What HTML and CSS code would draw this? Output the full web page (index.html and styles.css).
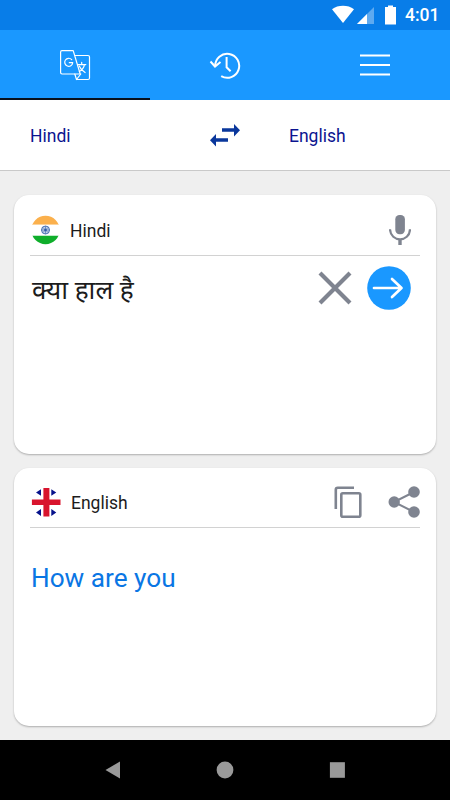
FILE: index.html
```html
<!DOCTYPE html>
<html lang="en">
<head>
    <meta charset="UTF-8">
    <meta name="viewport" content="width=device-width, initial-scale=1.0">
    <title>Hindi English Translator</title>
    <link rel="stylesheet" href="styles.css">
</head>
<body>
    <div class="status-bar">
        <svg class="signals" width="66" height="20" viewBox="0 0 66 20" fill="#fff">
            <path d="M0 4.2C6-.4 16-.4 22 4.2L11 18z"/>
            <path d="M42 2v17H25z" opacity=".35"/>
            <path d="M35 9v10H25z"/>
            <path d="M53 2h3V.5h5V2h3v17.5H53z"/>
        </svg>
        <span class="clock">4:01</span>
    </div>

    <div class="tabs">
        <div class="tab active">
            <svg width="32" height="32" viewBox="0 0 32 32" fill="none" stroke="#fff" stroke-width="1.2" stroke-linejoin="round" stroke-linecap="round">
                <path d="M3 1.6h11.2l7 23.4H3q-1.4 0-1.4-1.4V3Q1.6 1.6 3 1.6z"/>
                <path d="M15.8 6.5H29q1.5 0 1.5 1.5v21q0 1.5-1.5 1.5H17.5L15.8 25M17.5 30.5L21.8 25"/>
                <path d="M12.7 10.6A4 4 0 1 0 13.7 13.7H10.3"/>
                <path d="M18.6 15.6h8.2M22.7 13.4v2.2M25.4 15.6c-.4 3-2.6 5.5-5 7M20.4 17.2c1 2.7 3 4.7 5.7 6.3"/>
            </svg>
        </div>
        <div class="tab">
            <svg width="32" height="32" viewBox="0 0 32 32" fill="none" stroke="#fff" stroke-width="2">
                <path d="M6.2 17A12 12 0 1 1 12.2 27.2"/>
                <path d="M1.5 12.5L6 17.5L11.5 13M17.6 8v10.3l4 4"/>
            </svg>
        </div>
        <div class="tab">
            <svg width="30" height="24" viewBox="0 0 30 24" fill="none" stroke="#fff" stroke-width="2">
                <path d="M0 2.5h30M0 12h30M0 21.5h30"/>
            </svg>
        </div>
    </div>

    <div class="languages">
        <span class="lang">Hindi</span>
        <svg width="30" height="24" viewBox="0 0 30 24" fill="#0a379c">
            <path d="M12 5.3h12V1l6 6.2-6 6.2V8.7H12z"/>
            <path d="M18 15.3H6V11l-6 6.2 6 6.2v-4.7h12z"/>
        </svg>
        <span class="lang">English</span>
    </div>

    <div class="content">
        <div class="card">
            <div class="card-head source-head">
                <svg class="flag" width="30" height="30" viewBox="0 0 30 30">
                    <clipPath id="round"><circle cx="15.5" cy="15" r="14.2"/></clipPath>
                    <g clip-path="url(#round)">
                        <path fill="#fbb04c" d="M0 0h30v9.8H0z"/>
                        <path fill="#fff" d="M0 9.8h30v11H0z"/>
                        <path fill="#0fae2b" d="M0 20.8h30V30H0z"/>
                    </g>
                    <circle cx="15.5" cy="15" r="4" fill="#c6d3ea" stroke="#4a72b5"/>
                    <path d="M15.5 11v8M11.5 15h8M12.7 12.2l5.6 5.6M18.3 12.2l-5.6 5.6" stroke="#4a72b5" stroke-width=".7"/>
                    <circle cx="15.5" cy="15" r="1.3" fill="#2f5ba8"/>
                </svg>
                <span class="card-title">Hindi</span>
                <svg class="mic" width="22" height="30" viewBox="0 0 22 30">
                    <rect x="6.3" y="0" width="9.6" height="19.2" rx="4.2" fill="#7f8490"/>
                    <path d="M1 14.3C1.5 27.6 20.6 27.6 21 14.3" fill="none" stroke="#7f8490" stroke-width="2.2"/>
                    <path d="M11 24v6" stroke="#7f8490" stroke-width="3.4"/>
                </svg>
            </div>
            <div class="source">
                <span class="source-text" lang="hi">क्या हाल है</span>
                <svg width="34" height="34" viewBox="0 0 34 34" stroke="#7f8490" stroke-width="4.2">
                    <path d="M2 2l30 30M32 2L2 32"/>
                </svg>
                <svg class="go" width="44" height="44" viewBox="0 0 44 44" fill="none">
                    <circle cx="22" cy="22" r="21.8" fill="#1a98ff"/>
                    <path d="M7 22h27M25 13l9.5 9-9.5 9" stroke="#fff" stroke-width="2.7" stroke-linecap="round" stroke-linejoin="round"/>
                </svg>
            </div>
        </div>

        <div class="card">
            <div class="card-head">
                <svg class="flag flag-uk" width="30" height="30" viewBox="0 0 30 30">
                    <path fill="#07138c" d="M10 2.3v6.5L5 5.6zM20.3 2.3v6.5l5-3.2zM10 22v7l-5-3.5zM20.3 22v7l5-3.5z"/>
                    <path fill="#d8142d" d="M12.4 1h6v28.5h-6z"/>
                    <path fill="#d8142d" d="M.9 12.5h28.6V18H.9z"/>
                </svg>
                <span class="card-title">English</span>
                <svg class="copy" width="28" height="32" viewBox="0 0 28 32" fill="none" stroke="#7f8490" stroke-width="2.6">
                    <path d="M20 1.8H3.8q-2 0-2 2V23"/>
                    <rect x="7.3" y="7.3" width="19" height="23.4" rx="1.5"/>
                </svg>
                <svg width="32" height="32" viewBox="0 0 32 32" fill="#7f8490">
                    <path d="M26 6L6 16l20 10" fill="none" stroke="#7f8490" stroke-width="2"/>
                    <circle cx="6.2" cy="16" r="5.7"/>
                    <circle cx="26" cy="6" r="5.8"/>
                    <circle cx="26" cy="26" r="5.8"/>
                </svg>
            </div>
            <p class="result">How are you</p>
        </div>
    </div>

    <div class="nav-bar">
        <svg width="16" height="18" viewBox="0 0 16 18"><path fill="#999" d="M15 .5v17L.5 9z"/></svg>
        <svg width="18" height="18" viewBox="0 0 18 18"><circle cx="9" cy="9" r="8.4" fill="#999"/></svg>
        <svg width="16" height="18" viewBox="0 0 16 18"><path fill="#999" d="M.9 1.2h15v15.6H.9z"/></svg>
    </div>
</body>
</html>
```

FILE: styles.css
```css
body {
    margin: 0;
    height: 800px;
    display: flex;
    flex-direction: column;
    font-family: Roboto, "Noto Sans", "Noto Sans Devanagari", sans-serif;
    background: #efefef;
}
svg {
    display: block;
    flex-shrink: 0;
}
.status-bar {
    height: 30px;
    display: flex;
    align-items: center;
    justify-content: flex-end;
    background: #087de8;
}
.signals {
    margin-right: 7px;
}
.clock {
    width: 45px;
    color: #fff;
    font-size: 17.5px;
    font-weight: 500;
    line-height: 31px;
}
.tabs {
    height: 70px;
    display: flex;
    background: #1a98ff;
}
.tab {
    flex: 1;
    display: flex;
    align-items: center;
    justify-content: center;
    box-sizing: border-box;
    border-top: 2px solid transparent;
    border-bottom: 2px solid transparent;
}
.tab.active {
    border-bottom-color: #08101c;
}
.languages {
    height: 70px;
    display: grid;
    grid-template-columns: 180px 30px 1fr;
    align-items: center;
    padding-left: 30px;
    background: #fff;
    border-bottom: 1px solid #c9c9c9;
}
.lang {
    padding-top: 2px;
    font-size: 17.5px;
    color: #0b1490;
}
.lang:last-child {
    padding-left: 49px;
}
.content {
    flex: 1;
    padding: 24px 14px 14px;
    display: flex;
    flex-direction: column;
    gap: 14px;
}
.card {
    flex: 1;
    padding: 0 16px;
    background: #fff;
    border-radius: 15px;
    box-shadow: 0 1px 2px rgba(0, 0, 0, 0.28);
}
.card-head {
    height: 60px;
    display: flex;
    align-items: center;
    padding-top: 10px;
    box-sizing: border-box;
    border-bottom: 1px solid #d2d2d2;
}
.source-head {
    height: 61px;
}
.flag {
    margin-right: 10px;
}
.flag-uk {
    margin-left: 1px;
}
.card-title {
    flex: 1;
    padding-top: 2px;
    font-size: 17.5px;
    color: #1c1c1c;
}
.mic {
    margin-right: 9px;
}
.copy {
    margin-right: 26px;
}
.source {
    display: flex;
    align-items: center;
    padding-top: 10px;
}
.source-text {
    flex: 1;
    padding: 5px 0 0 2px;
    font-size: 26.3px;
    line-height: 39px;
    color: #1c1c1c;
}
.go {
    margin: 0 9px 0 15px;
}
.result {
    margin: 34px 0 0 1px;
    font-size: 26.2px;
    line-height: 32px;
    color: #0a76e4;
}
.nav-bar {
    height: 60px;
    display: flex;
    align-items: center;
    justify-content: center;
    gap: 95px;
    background: #000;
}
```
